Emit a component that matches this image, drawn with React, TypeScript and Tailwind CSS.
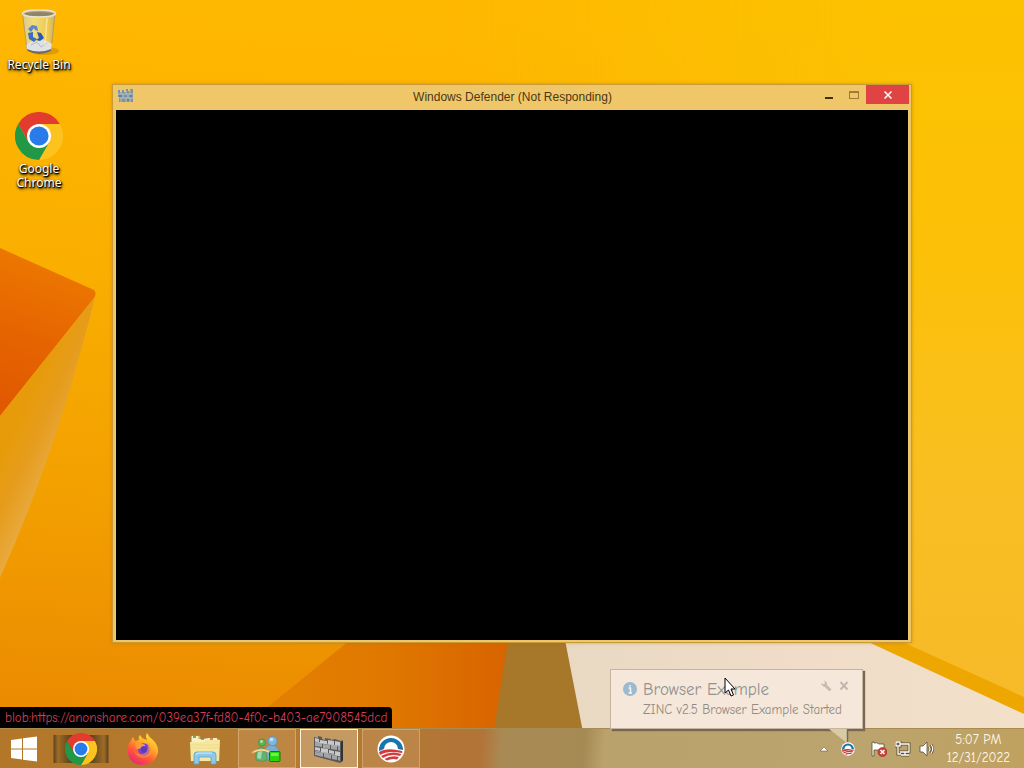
import type { ReactNode } from "react";

const comic = "font-['Comic_Sans_MS','Comic_Neue','Lato','Noto_Sans',sans-serif]";

function Wallpaper() {
  return (
    <svg
      aria-hidden="true"
      className="absolute inset-0 h-full w-full"
      viewBox="0 0 1024 768"
      preserveAspectRatio="none"
    >
      <defs>
        <linearGradient id="sky" x1="0.3" y1="0" x2="0.2" y2="1">
          <stop offset="0" stopColor="#ffb800" />
          <stop offset="0.35" stopColor="#faaf00" />
          <stop offset="0.65" stopColor="#f3a000" />
          <stop offset="1" stopColor="#e98700" />
        </linearGradient>
        <linearGradient id="east" x1="0" y1="0" x2="0" y2="1">
          <stop offset="0" stopColor="#fcc200" />
          <stop offset="0.35" stopColor="#fbc008" />
          <stop offset="0.6" stopColor="#f9bf20" />
          <stop offset="1" stopColor="#f6b82c" />
        </linearGradient>
        <linearGradient id="eastFade" gradientUnits="userSpaceOnUse" x1="450" y1="0" x2="900" y2="0">
          <stop offset="0" stopColor="#fff" stopOpacity="0" />
          <stop offset="1" stopColor="#fff" />
        </linearGradient>
        <mask id="eastMask">
          <rect x="450" width="574" height="768" fill="url(#eastFade)" />
        </mask>
        <linearGradient id="peak" x1="0.4" y1="0" x2="0.2" y2="1">
          <stop offset="0" stopColor="#ed7a00" />
          <stop offset="0.5" stopColor="#e66500" />
          <stop offset="1" stopColor="#e05800" />
        </linearGradient>
        <linearGradient id="fold" gradientUnits="userSpaceOnUse" x1="15" y1="425" x2="58" y2="445">
          <stop offset="0" stopColor="#e79b0a" />
          <stop offset="0.5" stopColor="#e69c1c" />
          <stop offset="1" stopColor="#e8a83a" />
        </linearGradient>
        <linearGradient id="ember" x1="0" y1="0" x2="1" y2="0">
          <stop offset="0" stopColor="#e48400" />
          <stop offset="0.5" stopColor="#e07800" />
          <stop offset="0.85" stopColor="#d86400" />
          <stop offset="1" stopColor="#d65e00" />
        </linearGradient>
        <linearGradient id="cream" x1="0" y1="0" x2="1" y2="0">
          <stop offset="0" stopColor="#e9d9c2" />
          <stop offset="0.5" stopColor="#f0dcc8" />
          <stop offset="1" stopColor="#f2e0c8" />
        </linearGradient>
      </defs>
      <rect width="1024" height="768" fill="url(#sky)" />
      <rect x="450" width="574" height="768" fill="url(#east)" mask="url(#eastMask)" />
      <path d="M0 248L94 290Q97 293 94 298L0 416Z" fill="url(#peak)" />
      <path d="M95 297L0 416V578Q58 448 95 297Z" fill="url(#fold)" />
      <path d="M350 640L258 715L210 768H560V640Z" fill="url(#ember)" />
      <path d="M508 640L488 768H600L566 640Z" fill="#a7772a" />
      <path d="M565 640L590 768H1024V713L866 640Z" fill="url(#cream)" />
      <path d="M864 640L1024 714V697L898 640Z" fill="#eea600" />
    </svg>
  );
}

function ChromeLogo({ className }: { className: string }) {
  return (
    <svg aria-hidden="true" viewBox="0 0 48 48" className={className}>
      <path d="M3.2 12A24 24 0 0 1 44.8 12H24L13.6 30Z" fill="#e33b2e" />
      <path d="M44.8 12A24 24 0 0 1 24 48L34.4 30L24 12Z" fill="#fcc31e" />
      <path d="M24 48A24 24 0 0 1 3.2 12L13.6 30H34.4Z" fill="#229847" />
      <circle cx="24" cy="24" r="12" fill="#fff" />
      <circle cx="24" cy="24" r="9.6" fill="#2a7bea" />
    </svg>
  );
}

function RecycleBinIcon() {
  return (
    <svg aria-hidden="true" viewBox="0 0 48 48" className="h-12 w-12">
      <defs>
        <linearGradient id="glass" x1="0" x2="1">
          <stop offset="0" stopColor="#d9c98a" />
          <stop offset="0.35" stopColor="#f2dc7c" />
          <stop offset="0.8" stopColor="#edc84c" />
          <stop offset="1" stopColor="#c9b27a" />
        </linearGradient>
      </defs>
      <ellipse cx="30" cy="43" rx="14" ry="4" fill="#c98c00" opacity=".6" />
      <path d="M7.500 5L12 42Q24 48 36 42L40 5Z" fill="url(#glass)" stroke="#a8936a" strokeWidth=".8" />
      <path d="M11.500 37Q17 31 22 33Q29 30 37 36L36 42Q24 47 12 42Z" fill="#dfe1e2" />
      <path d="M16 37L22 34L26 39L32 35" fill="none" stroke="#b6bcc4" />
      <path d="M12 41Q24 46 36 41V43Q24 49 12.500 43Z" fill="#756a60" />
      <ellipse cx="24" cy="5.500" rx="16.500" ry="3.500" fill="#b8a878" stroke="#e9e2cc" strokeWidth="1.500" />
      <ellipse cx="24" cy="6" rx="14" ry="2" fill="#8e8468" />
      <path d="M13 21L17 17L22 18L23 23L20 22L19 20L16 24Z" fill="#5a87cc" />
      <path d="M13 25L18 24L18 29L22 31L19 34L14 31Z" fill="#3c6cbc" />
      <path d="M22 24L26 25L29 30L25 33L21 32L24 30Z" fill="#2858b4" />
      <path d="M32 10L30 37" stroke="#fff3c0" strokeWidth="1.500" opacity=".6" />
    </svg>
  );
}

function FirefoxLogo() {
  return (
    <svg aria-hidden="true" viewBox="0 0 32 32" className="h-8 w-8">
      <defs>
        <linearGradient id="fox" x1="0.8" y1="0" x2="0.2" y2="1">
          <stop offset="0" stopColor="#ffe63c" />
          <stop offset="0.35" stopColor="#ffae28" />
          <stop offset="0.65" stopColor="#ff5a36" />
          <stop offset="1" stopColor="#e8207c" />
        </linearGradient>
      </defs>
      <path
        d="M6 4L8 8L12 7Q11 3 13 2Q15 6 20 7Q18 3 20 0Q22 4 26 7Q32 13 31 20Q28 31 16 32Q4 32 1 21Q-1 12 4 8Q4 6 6 4Z"
        fill="url(#fox)"
      />
      <path d="M11 12Q15 9 20 11Q24 15 22 20Q19 24 14 22Q10 19 11 12Z" fill="#7542d9" />
      <path d="M8 11Q11 8 16 11Q19 12 18 13Q15 13 14 15Q12 17 9 15Z" fill="#ff9a3c" />
      <path d="M19 8Q25 12 25 18Q23 25 16 25Q8 24 7 17Q10 21 14 21Q19 21 20 17Q22 13 19 8Z" fill="#ff9440" opacity=".55" />
      <path d="M14 14Q18 12 20 15Q21 19 17 20Q13 19 14 14Z" fill="#5c3bbb" />
    </svg>
  );
}

function ExplorerIcon() {
  return (
    <svg aria-hidden="true" viewBox="0 0 32 32" className="h-8 w-8">
      <path d="M2 3H11V6H30V28H2Z" fill="#e4c96c" stroke="#b99740" strokeWidth=".6" />
      <path d="M3 3H9V6H14L20 5H28V9H3Z" fill="#f8f0c4" />
      <path d="M4 4H7" stroke="#3a9a4c" strokeWidth="1.500" />
      <path d="M12 6H15" stroke="#4a8cc8" strokeWidth="1.500" />
      <path d="M21 6H24" stroke="#c06848" strokeWidth="1.500" />
      <path d="M1 9H15L17 7H31L30 28H2Z" fill="#f6e7a0" />
      <path d="M2 12H30M2 15H30" stroke="#ecd680" strokeWidth=".7" />
      <path d="M5 31V22Q5 19 8 19H24Q27 19 27 22V31H22V24H10V31Z" fill="#8ec9ea" stroke="#5aa2cf" strokeWidth=".8" />
      <path d="M7 22Q7 20 9 20H23" fill="none" stroke="#d6f1fb" />
    </svg>
  );
}

function MessengerIcon() {
  return (
    <svg aria-hidden="true" viewBox="0 0 32 32" className="h-8 w-8">
      <path d="M14 17Q15 12 21 12Q28 13 28 20L25 27H15Z" fill="#78aecf" stroke="#4c86b4" strokeWidth=".5" />
      <circle cx="21.500" cy="8" r="4.600" fill="#7db8e2" stroke="#4c8ab8" strokeWidth=".6" />
      <circle cx="20.500" cy="6.500" r="1.800" fill="#c2e2f6" />
      <path d="M5 27Q4 15 10 14Q16 15 16 27Q10 30 5 27Z" fill="#69b06a" stroke="#3c863e" strokeWidth=".5" />
      <circle cx="11" cy="9.500" r="3.600" fill="#58b758" stroke="#368a38" strokeWidth=".6" />
      <circle cx="10.500" cy="8.500" r="1.400" fill="#b2e6a6" />
      <path d="M7 19L11 18L10 26L6 25Z" fill="#a5d9b2" />
      <path d="M1 20Q10 13 23 21" fill="none" stroke="#f0b264" strokeWidth="2" />
      <path d="M3 19Q10 15 18 19" fill="none" stroke="#ffe6ac" />
      <rect x="18.500" y="18.500" width="10.500" height="10" rx="1" fill="#28d808" stroke="#16780c" />
      <path d="M20 20H27.500V23H20Z" fill="#72ef4c" />
    </svg>
  );
}

function WallIcon({ className }: { className: string }) {
  return (
    <svg aria-hidden="true" viewBox="0 0 32 28" className={className}>
      <path d="M1 2L5 3V1L9 2V4L12 5V3L18 4V5L22 4L28 6L30 5V26L27 28L1 21Z" fill="#5a5957" />
      <g fill="#c6c8cb">
        <path d="M2 3L6 4V7L2 6ZM7 5L14 6V9L7 8ZM15 5L21 6V10L15 9ZM22 6L27 7V11L22 10Z" />
        <path d="M2 12L7 13V16L2 15ZM8 13L15 14V18L8 17ZM16 15L21 16V19L16 18ZM22 16L27 17V21L22 20Z" />
      </g>
      <g fill="#a2a4a8">
        <path d="M2 7L9 8V12L2 11ZM10 9L17 10V14L10 13ZM18 10L24 11V15L18 14ZM25 12L27 12V16L25 15Z" />
        <path d="M2 17L10 18V22L2 20ZM11 18L18 20V24L11 22ZM19 20L24 21V25L19 24ZM25 22H27V26L25 25Z" />
      </g>
      <path d="M2 6.500L27 11.500M2 16L27 21" stroke="#dfe2e6" strokeWidth=".6" />
      <path d="M28 7L30 6V25L28 27Z" fill="#343332" />
    </svg>
  );
}

function SunriseLogo({ className }: { className: string }) {
  return (
    <svg aria-hidden="true" viewBox="0 0 28 28" className={className}>
      <circle cx="14" cy="14" r="13.500" fill="#fff" />
      <path d="M2 15A12 12 0 1 1 26 15L21 14A7 7 0 0 0 7 14L2 16Z" fill="#1775ae" />
      <path d="M2 17Q10 12 25 16Q26 17 25 18Q11 15 3 20Z" fill="#d23c3c" />
      <path d="M4 21Q14 15 24.500 19L23 21Q13 18 6 23Z" fill="#d23c3c" />
      <path d="M7.500 24Q14 20 22 22L20 24.500Q15 23 10 25.500Z" fill="#d23c3c" />
    </svg>
  );
}

function WindowsLogo() {
  return (
    <svg aria-hidden="true" viewBox="0 0 28 26" className="h-[26px] w-7">
      <path d="M1 4L12 2.500V12.500H1ZM13 2.300L27 0.500V12.500H13ZM1 13.500H12V23.500L1 22ZM13 13.500H27V25.500L13 23.700Z" fill="#fff" />
    </svg>
  );
}

function DesktopIcon({ label, children }: { label: string; children: ReactNode }) {
  return (
    <button className="flex w-[76px] flex-col items-center text-center font-['Noto_Sans',sans-serif] text-[12px] leading-[14px] text-white [text-shadow:1px_1px_1px_#000,0_1px_2px_#000,1px_2px_3px_#000]">
      {children}
      <span className="mt-0.5 w-[70px]">{label}</span>
    </button>
  );
}

function AppWindow() {
  return (
    <section className="absolute top-[84px] right-28 bottom-[125px] left-28 flex flex-col border border-[#c99a38] bg-[#f0c768] px-[3px] pb-0.5 shadow-[0_0_3px_#a8740080]">
      <header className="relative -mr-px flex h-[25px] shrink-0 items-start justify-between">
        <svg aria-hidden="true" viewBox="0 0 16 14" className="mt-1 ml-0.5 h-3.5 w-4">
          <path d="M0 1H2V3H4V1H6V3H8V0H10V2H12V0H15V13H1V8H0Z" fill="#7e94a4" />
          <path d="M0 5H15M1 9H15M3 2V5M8 2V5M12 1V5M5 5V9M10 5V9M3 9V13M8 9V13M12 9V13" stroke="#cfd2be" strokeWidth=".7" />
          <path d="M1 7H4M9 11H11M12 7H14" stroke="#5272a0" />
        </svg>
        <h1 className="absolute inset-x-28 top-1 text-center text-[12px] leading-4 text-[#4c3714]">
          Windows Defender (Not Responding)
        </h1>
        <div className="flex h-[19px]">
          <button aria-label="Minimize" className="flex w-[25px] items-center justify-center">
            <span className="mt-1.5 h-0.5 w-2 bg-[#41300d]" />
          </button>
          <button aria-label="Maximize" className="flex w-[25px] items-center justify-center">
            <span className="h-2 w-2.5 border border-t-2 border-[#a17b32]" />
          </button>
          <button aria-label="Close" className="flex w-[43px] items-center justify-center bg-[#e04343]">
            <svg aria-hidden="true" viewBox="0 0 8 8" className="h-2 w-2">
              <path d="M.5.5L7.500 7.500M7.500.5L.5 7.500" stroke="#fff" strokeWidth="1.500" />
            </svg>
          </button>
        </div>
      </header>
      <div className="flex-1 bg-black" />
    </section>
  );
}

function Balloon() {
  return (
    <aside className="absolute right-[161px] bottom-[39px] flex h-[60px] w-[253px] items-start gap-1.5 border border-[#c5b49f] bg-[#f5e8da] pt-3 pr-3 pl-3 shadow-[2px_2px_1px_#7a6655]">
      <svg aria-hidden="true" viewBox="0 0 14 14" className="h-3.5 w-3.5 shrink-0">
        <circle cx="7" cy="7" r="7" fill="#9bb9cf" />
        <path d="M7 3V4.500M5.500 6H7.500V11M5.500 11H9" stroke="#f8f4ee" strokeWidth="1.500" fill="none" />
      </svg>
      <div className="whitespace-nowrap text-[#94897f]">
        <h2 className="text-[17px] leading-4 text-[#939192]">Browser Example</h2>
        <p className="mt-1 text-[13px] leading-4">ZINC v2.5 Browser Example Started</p>
      </div>
      <div className="absolute top-2.5 right-3 flex gap-1.5">
        <button aria-label="Notification options">
          <svg aria-hidden="true" viewBox="0 0 12 12" className="h-3 w-3">
            <path d="M5 5L10.500 10.500" stroke="#c5bcb4" strokeWidth="3" />
            <path d="M1 3Q1 5 4 7Q7 6 7 3Q6 1 4 0.500L5 3L4 4.500Z" fill="#c5bcb4" />
          </svg>
        </button>
        <button aria-label="Close notification">
          <svg aria-hidden="true" viewBox="0 0 12 12" className="h-3 w-3">
            <path d="M2.500 2L9.500 9.500M9.500 2L2.500 9.500" stroke="#c0b8b0" strokeWidth="2" />
          </svg>
        </button>
      </div>
      <svg aria-hidden="true" viewBox="0 0 24 16" className="absolute right-3 -bottom-4 z-20 h-4 w-6">
        <path d="M3 1H21V15Z" fill="#d8cba5" />
        <path d="M21.500 1V14" stroke="#7a6a4c" strokeWidth="1.500" />
      </svg>
    </aside>
  );
}

function TaskButton({ label, tone, children }: { label: string; tone: string; children: ReactNode }) {
  return (
    <button aria-label={label} className={`flex h-[39px] w-[58px] items-center justify-center ${tone}`}>
      {children}
    </button>
  );
}

function Taskbar() {
  return (
    <footer className="relative flex h-10 shrink-0 items-end justify-between border-t border-[#a98a50] bg-[linear-gradient(95deg,#b3772a_0,#b47a30_30%,#b27438_47%,#a98a54_49%,#a68a54_57%,#b9a26c_59%,#bba46d_85%,#c0a160_100%)]">
      <nav aria-label="Taskbar" className="flex items-center gap-1">
        <button aria-label="Start" className="flex h-[39px] w-12 items-center justify-center">
          <WindowsLogo />
        </button>
        <TaskButton
          label="Google Chrome"
          tone="bg-[linear-gradient(90deg,transparent_1px,#5e451d_2px,#a06c26_6px,#5e451d_18px,#5e451d_40px,#a06c26_52px,#5e451d_56px,transparent_57px)] bg-[length:100%_28px] bg-center bg-no-repeat"
        >
          <ChromeLogo className="h-8 w-8" />
        </TaskButton>
        <TaskButton label="Firefox" tone="">
          <FirefoxLogo />
        </TaskButton>
        <TaskButton label="File Explorer" tone="">
          <ExplorerIcon />
        </TaskButton>
        <TaskButton label="Messenger" tone="border border-[#d4a66c] bg-[#bd8743]">
          <MessengerIcon />
        </TaskButton>
        <TaskButton label="Windows Defender" tone="border border-[#fff3dc] bg-[#c59a62]">
          <WallIcon className="h-7 w-8" />
        </TaskButton>
        <TaskButton label="Browser Example" tone="border border-[#d2a06c] bg-[#bc8548]">
          <SunriseLogo className="h-7 w-7" />
        </TaskButton>
      </nav>
      <div className="flex h-[39px] items-center gap-2 pr-3.5">
        <button aria-label="Show hidden icons" className="mr-1">
          <svg aria-hidden="true" viewBox="0 0 10 6" className="h-1.5 w-2.5">
            <path d="M1 5L5 1L9 5Z" fill="#fff" stroke="#735f3c" strokeWidth=".6" />
          </svg>
        </button>
        <button aria-label="Browser Example status" className="mr-2">
          <SunriseLogo className="h-3.5 w-3.5" />
        </button>
        <button aria-label="Action Center">
          <svg aria-hidden="true" viewBox="0 0 16 16" className="h-4 w-4">
            <path d="M1 1H3V2Q6 1 8 3L13 3V9H3V15H1Z" fill="#fff" stroke="#5e4d2e" strokeWidth=".8" />
            <circle cx="11.500" cy="11" r="4.500" fill="#cf4038" stroke="#8d2b22" strokeWidth=".6" />
            <path d="M9.500 9L13.500 13M13.500 9L9.500 13" stroke="#fff" strokeWidth="1.500" />
          </svg>
        </button>
        <button aria-label="Network">
          <svg aria-hidden="true" viewBox="0 0 16 16" className="h-4 w-4">
            <path d="M5 3H14V11H5M10 11V14M6 14H14M3 6V13H6M1 1H5V5H1Z" fill="none" stroke="#5e4d2e" strokeWidth="3" />
            <path d="M5 3H14V11H5M10 11V14M6 14H14M3 6V13H6M1 1H5V5H1Z" fill="none" stroke="#fff" strokeWidth="1.300" />
          </svg>
        </button>
        <button aria-label="Volume">
          <svg aria-hidden="true" viewBox="0 0 16 16" className="h-4 w-4">
            <path d="M1 5H4L8 1V15L4 11H1Z" fill="#fff" stroke="#5e4d2e" strokeWidth=".8" />
            <path d="M10 5.500Q12 8 10 10.500M12 3.500Q15.500 8 12 12.500" fill="none" stroke="#5e4d2e" strokeWidth="2.500" />
            <path d="M10 5.500Q12 8 10 10.500M12 3.500Q15.500 8 12 12.500" fill="none" stroke="#fff" strokeWidth="1.200" />
          </svg>
        </button>
        <button className="ml-1 text-center text-[13px] leading-[18px] text-[#fffaf0]">
          <time className="block">5:07 PM</time>
          <time className="block" dateTime="2022-12-31">12/31/2022</time>
        </button>
      </div>
    </footer>
  );
}

export default function App() {
  return (
    <main className="relative flex min-h-screen flex-col overflow-hidden bg-[#f9ae00] font-['Liberation_Sans',sans-serif]">
      <Wallpaper />
      <div className="relative flex flex-1 flex-col items-start gap-10 px-px pt-2">
        <DesktopIcon label="Recycle Bin">
          <RecycleBinIcon />
        </DesktopIcon>
        <DesktopIcon label="Google Chrome">
          <ChromeLogo className="h-12 w-12" />
        </DesktopIcon>
      </div>
      <AppWindow />
      <div className={comic}>
        <Taskbar />
        <p className="absolute bottom-10 left-0 rounded-tr-sm bg-black px-[5px] text-[13px] leading-[21px] whitespace-nowrap text-[#d63c58]">
          blob:https://anonshare.com/039ea37f-fd80-4f0c-b403-ae7908545dcd
        </p>
        <Balloon />
      </div>
      <svg aria-hidden="true" viewBox="0 0 12 20" className="absolute top-[677px] left-[724px] h-5 w-3">
        <path d="M1 1V16L4.500 13L7 19L9.500 18L7 12H11Z" fill="#fff" stroke="#000" />
      </svg>
    </main>
  );
}
